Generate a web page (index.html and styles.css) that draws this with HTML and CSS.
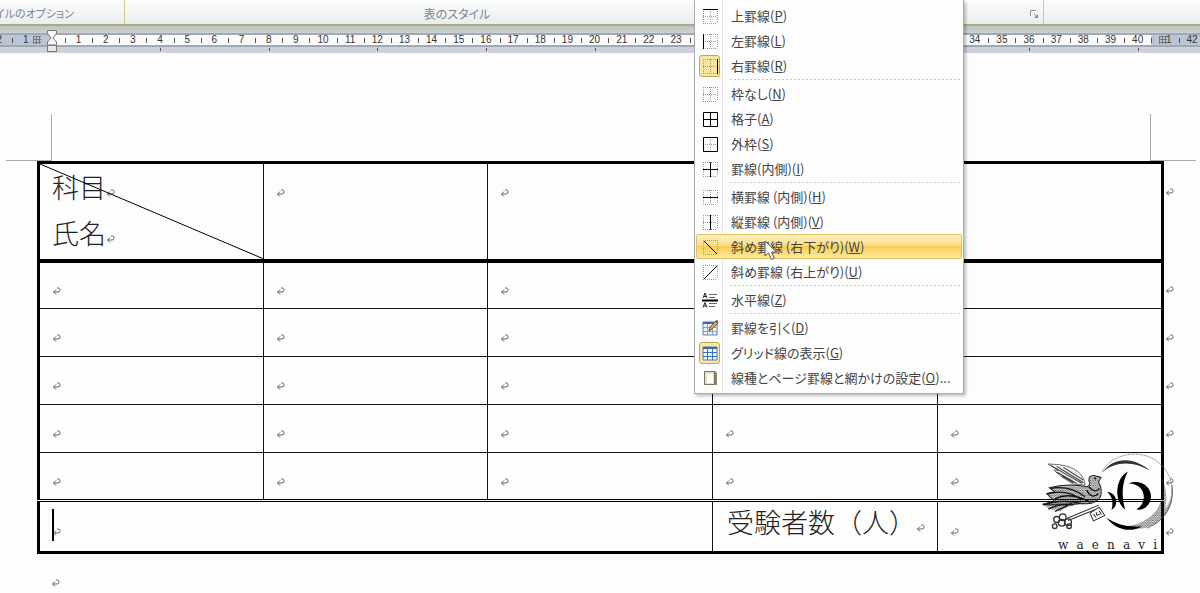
FILE: index.html
```html
<!DOCTYPE html>
<html lang="ja">
<head>
    <meta charset="UTF-8">
    <meta name="viewport" content="width=device-width, initial-scale=1.0">
    <title>罫線メニュー</title>
    <link rel="stylesheet" href="styles.css">
</head>
<body>
    <svg class="defs" width="0" height="0" aria-hidden="true">
        <symbol id="ret" viewBox="0 0 9 9"><path d="M5 1h1.500q1.500 0 1.500 1.500v.5q0 2-2 2H1.500M4 2.500L1.500 5 4 7.500" fill="none" stroke="#666"/></symbol>
        <symbol id="grid" viewBox="0 0 16 16"><path d="M1 1.500h14M1 8.500h14M1 15.500h14M1.500 1v14M8.500 1v14M15.500 1v14" fill="none" stroke="#999" stroke-dasharray="1 1"/></symbol>
        <symbol id="box" viewBox="0 0 16 16"><path d="M1 1.500h14M1 15.500h14M1.500 1v14M15.500 1v14" fill="none" stroke="#999" stroke-dasharray="1 1"/></symbol>
        <symbol id="sheet" viewBox="0 0 16 16"><path d="M1 2h14v13H1z" fill="#eef5ff" stroke="#5c7fb5"/><path d="M1 3h14" stroke="#3f69a8" stroke-width="2"/><path d="M1 7.500h14M1 11.500h14M5.500 4v11M10.500 4v11" stroke="#7ea3d6"/></symbol>
    </svg>

    <div class="ribbon">
        <div class="group options"><span>イルのオプション</span></div>
        <div class="group styles">表のスタイル</div>
        <div class="group borders">
            <button class="launcher" aria-label="線種とページ罫線と網かけの設定">
                <svg width="9" height="9" viewBox="0 0 9 9"><path d="M.5 6V.5H6M4 4l3 3" fill="none" stroke="#999"/><path d="M8 4v4H4z" fill="#888"/></svg>
            </button>
        </div>
        <div class="group"></div>
    </div>

    <div class="ruler">
        <div class="ruler-margin left"><span>2</span><i></i><span>1</span><b class="col-mark"></b></div>
        <div class="ruler-start"></div>
        <div class="ruler-scale" id="scale"></div>
        <div class="ruler-margin right"><i></i><b class="col-mark"></b><span>1</span><i></i><span>42</span></div>
        <svg class="indent" width="12" height="24" viewBox="0 0 12 24">
            <path d="M1.500 1.500h9v3L7 9l3.500 4v3h-9v-3L5 9 1.500 4.500z" fill="#f5f5f5" stroke="#777"/>
            <path d="M1.500 16.500h9v6h-9z" fill="#e8e8e8" stroke="#777"/>
        </svg>
    </div>

    <main class="page">
        <div class="crop-marks"><span class="crop tl"></span><span class="crop tr"></span></div>
        <table>
            <colgroup><col><col><col><col><col><col class="end-col"></colgroup>
            <tbody id="rows">
                <tr class="head">
                    <td class="corner">
                        <svg class="diagonal" viewBox="0 0 100 100" preserveAspectRatio="none"><path d="M0 0L100 100" stroke="#000" vector-effect="non-scaling-stroke"/></svg>
                        <p>科目<svg class="ret"><use href="#ret"/></svg></p>
                        <p>氏名<svg class="ret"><use href="#ret"/></svg></p>
                    </td>
                    <td><svg class="ret"><use href="#ret"/></svg></td>
                    <td><svg class="ret"><use href="#ret"/></svg></td>
                    <td><svg class="ret"><use href="#ret"/></svg></td>
                    <td><svg class="ret"><use href="#ret"/></svg></td>
                    <td class="row-end"><svg class="ret"><use href="#ret"/></svg></td>
                </tr>
                <tr class="total" id="total">
                    <td colspan="3"><span class="caret"></span><svg class="ret"><use href="#ret"/></svg></td>
                    <td class="label">受験者数（人）<svg class="ret"><use href="#ret"/></svg></td>
                    <td><svg class="ret"><use href="#ret"/></svg></td>
                    <td class="row-end"><svg class="ret"><use href="#ret"/></svg></td>
                </tr>
            </tbody>
        </table>
        <p class="after"><svg class="ret"><use href="#ret"/></svg></p>
    </main>

    <div class="logo">
        <svg viewBox="30 30 410 250" aria-hidden="true">
            <defs>
                <pattern id="dots" width="5" height="5" patternUnits="userSpaceOnUse"><path d="M0 0h3v2H0zM3 3h2v2H3z" fill="#222"/></pattern>
            </defs>
            <!-- ring -->
            <path d="M216 95C240 45 320 25 375 60C405 80 428 115 425 160" fill="none" stroke="#666" stroke-width="2" stroke-dasharray="6 2"/>
            <path d="M216 97C250 50 310 48 360 92C310 62 255 62 216 97z" fill="#333"/>
            <path d="M390 105C402 150 396 195 370 220C345 245 315 255 290 258C310 270 355 270 385 245C425 215 432 170 424 140C424 170 418 190 405 205C412 170 406 130 390 105z" fill="url(#dots)"/>
            <path d="M425 135C432 185 410 240 350 264" fill="none" stroke="#444" stroke-width="2"/>
            <path d="M228 232C255 252 295 262 335 258C300 280 255 268 228 232z"/>
            <!-- mark -->
            <path d="M293 94C255 115 250 180 285 208C274 170 274 130 293 94z"/>
            <path d="M295 130C350 110 385 170 345 203C335 209 327 210 319 207C352 190 350 130 295 130z"/>
            <path d="M231 155C265 160 265 200 244 209C250 188 247 170 231 155z"/>
            <!-- bird -->
            <path d="M54 72Q120 72 145 96Q163 112 165 135L130 132Q90 110 72 90L85 91z" fill="#eee" stroke="#333" stroke-width="2"/>
            <path d="M62 76L155 130M80 79L160 128M100 82L160 120M80 96L140 130M95 108L130 128" fill="none" stroke="#333" stroke-width="3"/>
            <path d="M178 111Q186 103 198 108L213 112 205 126Q218 148 211 170Q195 195 160 190Q90 196 37 192L72 183 50 160 74 155 58 143Q110 128 172 140Q184 132 176 122z" fill="url(#dots)" stroke="#222" stroke-width="3"/>
            <path d="M60 145Q120 135 165 170M52 161Q110 146 150 176M74 176Q120 154 180 186M40 194Q100 176 150 190M55 207Q90 188 130 194M75 214L125 190M170 150Q185 180 205 160M176 140Q195 162 208 145" fill="none" stroke="#111" stroke-width="4"/>
            <path d="M38 194L100 188 160 186 110 202 90 213 62 208z" fill="url(#dots)"/>
            <circle cx="195" cy="115" r="3"/>
            <!-- key -->
            <path d="M110 235L206 195M114 241L196 208" stroke="#333" stroke-width="3" fill="none"/>
            <path d="M180 219L207 201 224 226 190 242z" fill="#fff" stroke="#333" stroke-width="3"/>
            <path d="M190 222l8 10M198 216l2 9 10-2M207 212l7 11" fill="none" stroke="#333" stroke-width="3"/>
            <g fill="none" stroke="#333" stroke-width="4"><circle cx="98" cy="231" r="10"/><circle cx="80" cy="238" r="9"/><circle cx="95" cy="248" r="10"/><circle cx="114" cy="246" r="10"/><circle cx="74" cy="258" r="7"/><circle cx="117" cy="258" r="7"/></g>
        </svg>
        <div class="logo-name"><span>w</span><span>a</span><span>e</span><span>n</span><span>a</span><span>v</span><span>i</span></div>
    </div>

    <div class="menu" role="menu">
        <button role="menuitem"><span class="icon"><svg><use href="#grid"/><path d="M1 1.500h15" stroke="#000"/></svg></span>上罫線(<u>P</u>)</button>
        <button role="menuitem"><span class="icon"><svg><use href="#grid"/><path d="M1.500 1v15" stroke="#000"/></svg></span>左罫線(<u>L</u>)</button>
        <button role="menuitem"><span class="icon checked"><svg><use href="#grid"/><path d="M15.500 1v15" stroke="#000"/></svg></span>右罫線(<u>R</u>)</button>
        <hr>
        <button role="menuitem"><span class="icon"><svg><use href="#grid"/></svg></span>枠なし(<u>N</u>)</button>
        <button role="menuitem"><span class="icon"><svg><path d="M1.500 1.500h14v14h-14zM8.500 1v15M1 8.500h15" fill="none" stroke="#000"/></svg></span>格子(<u>A</u>)</button>
        <button role="menuitem"><span class="icon"><svg><use href="#grid"/><path d="M1.500 1.500h14v14h-14z" fill="none" stroke="#000"/></svg></span>外枠(<u>S</u>)</button>
        <button role="menuitem"><span class="icon"><svg><use href="#box"/><path d="M8.500 1v15M1 8.500h15" stroke="#000"/></svg></span>罫線(内側)(<u>I</u>)</button>
        <hr>
        <button role="menuitem"><span class="icon"><svg><use href="#grid"/><path d="M1 8.500h15" stroke="#000"/></svg></span>横罫線 (内側)(<u>H</u>)</button>
        <button role="menuitem"><span class="icon"><svg><use href="#grid"/><path d="M8.500 1v15" stroke="#000"/></svg></span>縦罫線 (内側)(<u>V</u>)</button>
        <button role="menuitem" class="active"><span class="icon"><svg><use href="#box"/><path d="M2 2l13 13" stroke="#000"/></svg></span>斜め罫線 (右下がり)(<u>W</u>)</button>
        <button role="menuitem"><span class="icon"><svg><use href="#box"/><path d="M2 15L15 2" stroke="#000"/></svg></span>斜め罫線 (右上がり)(<u>U</u>)</button>
        <hr>
        <button role="menuitem"><span class="icon"><svg><path d="M0 8.500h16" stroke="#000" stroke-width="2"/><path d="M7 2.500h8M7 5.500h6M7 11.500h8M7 14.500h6" stroke="#666"/><path d="M1 6l2-5 2 5M2 4.500h2M1 15.500l2-5 2 5M2 14h2" fill="none" stroke="#222"/></svg></span>水平線(<u>Z</u>)</button>
        <hr>
        <button role="menuitem"><span class="icon"><svg><use href="#sheet"/><path d="M7 11l1-4 6-6 2 2-6 6z" fill="#d9a860" stroke="#6b5230"/><path d="M13 1l2-1 2 2-1 2z" fill="#555"/></svg></span>罫線を引く(<u>D</u>)</button>
        <button role="menuitem"><span class="icon checked"><svg><use href="#sheet"/><path d="M5.500 4v11M10.500 4v11M1 7.500h14M1 11.500h14" stroke="#3c6fc0"/></svg></span>グリッド線の表示(<u>G</u>)</button>
        <button role="menuitem"><span class="icon"><svg><path d="M3 1h10l2 2v12H3z" fill="#8a8468"/><path d="M2.500 1.500h10v13h-10z" fill="#e5dfc5" stroke="#77735f"/><path d="M5 4h6v9H5z" fill="#fff"/></svg></span>線種とページ罫線と網かけの設定(<u>O</u>)...</button>
        <svg class="pointer" width="14" height="21" viewBox="0 0 14 21"><path d="M1 1v15l3.500-3.200L7.500 19.500l2.800-1.200L7.500 12H12.500z" fill="#fff" stroke="#555"/></svg>
    </div>

    <script>
        const ret = '<svg class="ret"><use href="#ret"/></svg>';

        // ruler numbers, one cell per character
        const scale = document.getElementById('scale');
        for (let i = 1; i <= 40; i++) {
            scale.insertAdjacentHTML('beforeend', `<span>${i}</span>`);
        }

        // empty rows between the heading and the total
        const total = document.getElementById('total');
        for (let i = 0; i < 5; i++) {
            total.insertAdjacentHTML('beforebegin',
                '<tr>' + `<td>${ret}</td>`.repeat(5) + `<td class="row-end">${ret}</td></tr>`);
        }
    </script>
</body>
</html>
```
FILE: styles.css
```css
body {
    margin: 0;
    position: relative;
    background-color: #fdfdfd;
    color: #222;
    font-family: "Noto Sans CJK JP", sans-serif;
    overflow: hidden;
}
.defs {
    position: absolute;
}
p {
    margin: 0;
}
button {
    font-family: inherit;
    border: none;
    background: none;
    padding: 0;
}

/* ribbon */
.ribbon {
    display: flex;
    height: 24px;
    background: linear-gradient(#fbfbfb, #ebeeee);
    border-bottom: 2px solid #a9aa86;
}
.group {
    flex: 1;
    box-sizing: border-box;
    border-right: 1px solid #cfc98c;
    font-size: 12px;
    line-height: 27px;
    color: #7c8593;
    text-align: center;
    font-feature-settings: "palt";
    white-space: nowrap;
}
.group:last-child {
    border-right: none;
}
.group.options {
    flex: 0 0 125px;
    min-width: 0;
    display: flex;
    justify-content: flex-end;
    padding-right: 50px;
    font-size: 11px;
}
.group.options span {
    min-width: 0;
    direction: rtl;
}
.group.styles {
    flex: 0 0 665px;
}
.group.borders {
    flex: 0 0 254px;
    display: flex;
    justify-content: flex-end;
    align-items: center;
    padding: 4px 4px 0 0;
}
.launcher {
    display: flex;
}

/* ruler */
.ruler {
    position: relative;
    display: flex;
    padding: 7px 0 6px;
    background: linear-gradient(#bfc6b8, #cbd2da 7px, #cdd1da);
    font-family: "Liberation Sans", sans-serif;
    font-size: 10px;
    line-height: 10px;
    color: #333;
}
.ruler > div {
    height: 10px;
    border-top: 2px solid #a0a8b2;
    border-bottom: 2px solid #a0a8b2;
    background-color: #fcfcfc;
}
.ruler .ruler-margin {
    display: flex;
    align-items: center;
    background-color: #bcc5d3;
}
.ruler-margin i {
    width: 1px;
    height: 5px;
    background-color: #555;
}
.ruler-margin.left {
    flex: 0 0 52px;
    gap: 10px;
}
.ruler-margin.left span:first-child {
    width: 2px;
    direction: rtl;
}
.ruler-margin.left .col-mark {
    margin-left: -6px;
}
.ruler-margin.right {
    flex: 0 0 49px;
    gap: 7px;
}
.ruler-margin.right span {
    margin-left: -8px;
}
.ruler-margin.right span:last-child {
    margin-left: 0;
}
.col-mark {
    width: 8px;
    height: 8px;
    background: repeating-linear-gradient(#777 0 1px, transparent 1px 3px), repeating-linear-gradient(90deg, #777 0 1px, transparent 1px 3px);
}
.ruler-start {
    flex: 0 0 13px;
}
.ruler-scale {
    flex: 1;
    display: flex;
}
.ruler-scale span {
    position: relative;
    flex: 1 1 0;
    text-align: center;
}
.ruler-scale span::before {
    content: "";
    position: absolute;
    left: 0;
    top: 3px;
    width: 1px;
    height: 5px;
    background-color: #555;
}
.ruler-scale span:nth-child(4n)::after {
    content: "";
    position: absolute;
    left: 50%;
    top: 13px;
    width: 1px;
    height: 3px;
    background-color: #555;
}
.indent {
    position: absolute;
    left: 46px;
    top: 3px;
}

/* document */
.page {
    padding: 61px 20px 0 37px;
}
.crop-marks {
    display: flex;
    justify-content: space-between;
    margin: 0 -16px 0 -31px;
}
.crop {
    width: 45px;
    height: 46px;
    border-bottom: 1px solid #aaa;
}
.crop.tl {
    border-right: 1px solid #aaa;
}
.crop.tr {
    border-left: 1px solid #aaa;
}
table {
    width: 100%;
    border-collapse: collapse;
    table-layout: fixed;
}
.end-col {
    width: 18px;
}
td {
    position: relative;
    box-sizing: border-box;
    height: 48px;
    padding: 10px 0 0 12px;
    border: 1px solid #111;
    vertical-align: middle;
    line-height: 8px;
}
td:first-child {
    border-left: 3px solid #000;
}
td:nth-last-child(2) {
    border-right: 3px solid #000;
}
.head td {
    height: 98px;
    padding-top: 23px;
    border-top: 3px solid #000;
    border-bottom: 4px solid #000;
    vertical-align: top;
}
.head .corner {
    padding-top: 0;
}
.corner p, .label {
    font-size: 27px;
    font-weight: 300;
    line-height: 46px;
    white-space: nowrap;
}
.total td {
    height: 52px;
    border-top: 3px double #000;
    border-bottom: 3px solid #000;
}
.total .label {
    padding-top: 0;
    padding-left: 14px;
    line-height: 40px;
    vertical-align: top;
}
td.row-end, .head td.row-end, .total td.row-end {
    border-top: none;
    border-right: none;
    border-bottom: none;
    padding-left: 1px;
}
.ret {
    width: 9px;
    height: 9px;
}
.diagonal {
    position: absolute;
    left: 0;
    top: 0;
    width: 100%;
    height: 100%;
}
.caret {
    position: absolute;
    left: 12px;
    top: 7px;
    width: 2px;
    height: 32px;
    background-color: #000;
}
.after {
    padding: 22px 14px 0;
    line-height: 10px;
}

/* logo */
.logo {
    position: absolute;
    right: 23px;
    top: 450px;
    width: 137px;
}
.logo svg {
    display: block;
}
.logo-name {
    display: flex;
    justify-content: space-between;
    margin: 4px 20px 0 18px;
    font-family: "DejaVu Serif", serif;
    font-size: 12px;
    line-height: 14px;
}

/* menu */
.menu {
    position: absolute;
    left: 694px;
    top: 0;
    width: 266px;
    padding: 3px 1px;
    border: 1px solid #a7abb0;
    border-top: none;
    background: linear-gradient(90deg, #fdfdfd 27px, #e2e4e7 27px 28px, #fdfdfd 28px);
    box-shadow: 2px 2px 3px rgba(0, 0, 0, 0.25);
}
.menu button {
    display: flex;
    align-items: center;
    box-sizing: border-box;
    width: 100%;
    height: 25px;
    padding-left: 2px;
    border: 1px solid transparent;
    border-radius: 2px;
    font-family: "Noto Sans CJK JP", sans-serif;
    font-size: 13px;
    font-feature-settings: "palt";
    color: #444;
    white-space: pre;
}
.menu button.active {
    border-color: #e3c05c;
    background: linear-gradient(#fdf0c0, #fbe08a 45%, #f8cd55 50%, #fdeaa0);
}
.menu hr {
    height: 1px;
    margin: 1px 0 1px 34px;
    border: none;
    background: repeating-linear-gradient(90deg, #c4c4c4 0 2px, transparent 2px 4px);
}
.icon {
    display: flex;
    align-items: center;
    justify-content: center;
    box-sizing: border-box;
    width: 21px;
    height: 22px;
    margin-right: 11px;
    border: 1px solid transparent;
    border-radius: 3px;
}
.icon svg {
    width: 16px;
    height: 16px;
}
.icon.checked {
    border-color: #c5a552;
    background-color: #fae6a4;
}
.pointer {
    position: absolute;
    left: 69px;
    top: 240px;
}
```
